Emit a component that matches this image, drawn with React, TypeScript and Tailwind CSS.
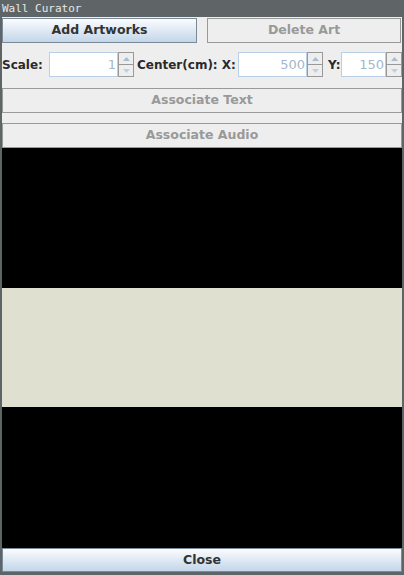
import React from "react";

const font = { fontFamily: '"DejaVu Sans", Verdana, sans-serif' };

function Spinner({ value, width }: { value: string; width: number }) {
  return (
    <div className="flex h-[25px]">
      <div
        className="h-full border border-[#b8cfe5] bg-white flex items-center justify-end pr-[1px] text-[13px] font-normal text-[#a3b8cc]"
        style={{ width }}
      >
        {value}
      </div>
      <div className="w-[16px] h-full flex flex-col border border-[#999999] bg-[#eeeeee]">
        <div className="flex-1 flex items-center justify-center border-b border-[#999999]">
          <svg width="7" height="4" viewBox="0 0 7 4">
            <path d="M0 4 L3.5 0 L7 4 Z" fill="#a9bdd1" />
          </svg>
        </div>
        <div className="flex-1 flex items-center justify-center">
          <svg width="7" height="4" viewBox="0 0 7 4">
            <path d="M0 0 L3.5 4 L7 0 Z" fill="#c2d0de" />
          </svg>
        </div>
      </div>
    </div>
  );
}

export default function App() {
  return (
    <div
      className="w-[404px] h-[575px] bg-[#5f6566] flex flex-col px-[2px] pb-[3px]"
      style={font}
    >
      <div
        className="h-[17px] flex items-center text-[11px] text-[#e6e8e8] leading-none"
        style={{ fontFamily: '"DejaVu Sans Mono", monospace' }}
      >
        Wall Curator
      </div>
      <div className="flex-1 bg-[#eeeeee] flex flex-col">
        <div className="flex pt-[1px] h-[26px]">
          <button className="w-[195px] h-[25px] border border-[#7a8a99] bg-gradient-to-b from-[#fbfcfe] to-[#c3d6e9] text-[12.5px] font-bold text-[#333333]">
            Add Artworks
          </button>
          <button className="ml-[10px] w-[194px] h-[25px] border border-[#999999] bg-[#eeeeee] text-[12.5px] font-bold text-[#999999]">
            Delete Art
          </button>
        </div>
        <div className="flex items-center mt-[9px] h-[25px] text-[12px] font-bold text-[#2a2a2a]">
          <span className="w-[47px]">Scale:</span>
          <Spinner value="1" width={69} />
          <span className="ml-[3px] w-[101px]">Center(cm): X:</span>
          <Spinner value="500" width={69} />
          <span className="ml-[5px] w-[13px]">Y:</span>
          <Spinner value="150" width={45} />
        </div>
        <button className="mt-[11px] h-[25px] w-full border border-[#999999] bg-[#eeeeee] text-[12.5px] font-bold text-[#999999]">
          Associate Text
        </button>
        <button className="mt-[10px] h-[25px] w-full border border-[#999999] bg-[#eeeeee] text-[12.5px] font-bold text-[#999999]">
          Associate Audio
        </button>
        <div className="h-[140px] bg-black" />
        <div className="h-[119px] bg-[#dfe0cf]" />
        <div className="flex-1 bg-black" />
        <button className="h-[24px] w-full border border-[#7a8a99] bg-gradient-to-b from-[#fbfcfe] to-[#c3d6e9] text-[12.5px] font-bold text-[#333333]">
          Close
        </button>
      </div>
    </div>
  );
}
